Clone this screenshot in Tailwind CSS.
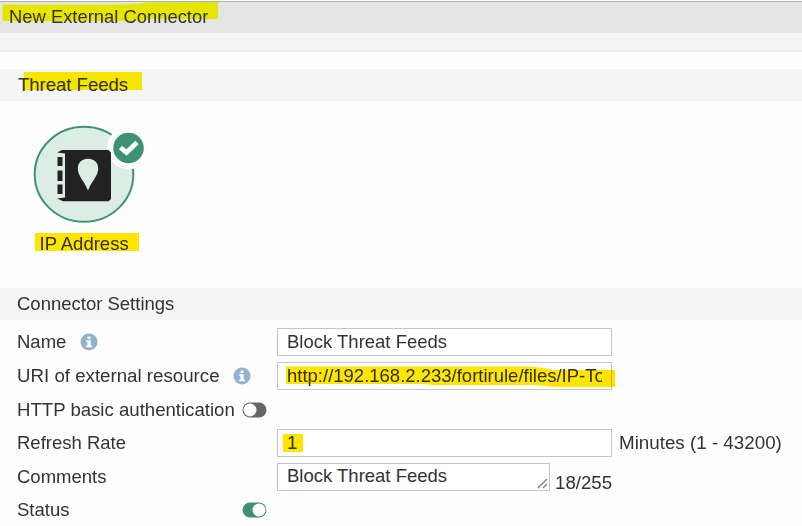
<!DOCTYPE html>
<html lang="en">
<head>
<meta charset="utf-8">
<title>New External Connector</title>
<script src="https://cdn.jsdelivr.net/npm/@tailwindcss/browser@4"></script>
</head>
<body class="bg-white">
<main class="h-[526px] w-[802px] overflow-hidden bg-[#fefefe] pt-px font-['Liberation_Sans',Arial,sans-serif] text-[18.5px] leading-[22px] text-[#333]">
  <header class="relative flex h-8 items-start border-t border-[#abb0af] bg-[#e5e5e5] pl-[9px] pt-[4px]">
    <h1 class="whitespace-nowrap text-[18.4px]">New External Connector</h1>
    <svg class="absolute left-0 -top-[2px] mix-blend-multiply" width="220" height="24"><path d="M2.5 4.500H120Q138 4 146 2.500L218 2V19H150L140 21H2.500Z" fill="#ffff00"/></svg>
  </header>
  <div class="h-[19px] border-b-2 border-[#ececec] bg-[#f5f5f5]"></div>
  <section class="mt-[17px]">
    <h2 class="relative flex h-8 items-center bg-[#f5f5f5] pl-[18px]">
      <span class="whitespace-nowrap">Threat Feeds</span>
      <svg class="absolute left-6 top-[3px] mix-blend-multiply" width="118" height="18"><rect width="118" height="18" fill="#fff000"/></svg>
    </h2>
    <div class="flex h-[187px] flex-col items-start pl-[30px] pt-[22px]">
      <svg width="120" height="104" viewBox="30 123 120 104">
        <ellipse cx="84" cy="174.300" rx="49.300" ry="47.500" fill="#dcede5" stroke="#3f9271" stroke-width="2"/>
        <circle cx="128.500" cy="148" r="21.500" fill="#fefefe"/>
        <circle cx="128.500" cy="148" r="15.300" fill="#3f9271"/>
        <path d="M120.500 147.500L126.500 152.500L137 142.500" fill="none" stroke="#fff" stroke-width="4.800"/>
        <path d="M62 150H108.500L111 152.500V199L108.500 201.200H63L57 198.500L65 197.500V153.500L57 152.500Z" fill="#222"/>
        <path d="M57.500 157H62.500V166H57.500ZM57.500 170.500H62.500V181H57.500ZM57.500 184.500H62.500V194H57.500Z" fill="#222"/>
        <path d="M88 190.500C85 182 77.800 176 77.800 168.700C77.800 162.500 82 158.800 88 158.800S98.200 162.500 98.200 168.700C98.200 176 91 182 88 190.500Z" fill="#dcede5"/>
      </svg>
      <div class="relative mt-[6px] ml-[9.500px] h-[24px] whitespace-nowrap">IP Address
        <svg class="absolute -left-[5px] top-0 mix-blend-multiply" width="105" height="18"><rect width="104" height="18" fill="#ffe600"/></svg>
      </div>
    </div>
  </section>
  <section>
    <h2 class="flex h-8 items-center bg-[#f5f5f5] pl-[17px] pb-px whitespace-nowrap">Connector Settings</h2>
    <div class="grid grid-cols-[260px_525px] grid-rows-[34px_34px_33px_34px_33px_34px] pl-[17px] pt-[5px]">
      <div class="flex items-center">
        <span>Name</span>
        <svg class="ml-[14px]" width="18" height="18" viewBox="0 0 18 18"><circle cx="9" cy="9" r="8.500" fill="#92b3cd"/><path d="M7.500 3.500H10.500V6H7.500ZM6.300 7.300H10.700V12.500H12V14.300H6.300V12.500H7.500V9H6.300Z" fill="#fff"/></svg>
      </div>
      <div class="flex items-center">
        <div class="flex h-[28px] w-[335px] items-center border border-[#c5c5c5] bg-white pl-[9px] pb-px">Block Threat Feeds</div>
      </div>
      <div class="flex items-center whitespace-nowrap">
        <span class="text-[18.700px]">URI of external resource</span>
        <svg class="ml-[13px]" width="18" height="18" viewBox="0 0 18 18"><circle cx="9" cy="9" r="8.500" fill="#92b3cd"/><path d="M7.500 3.500H10.500V6H7.500ZM6.300 7.300H10.700V12.500H12V14.300H6.300V12.500H7.500V9H6.300Z" fill="#fff"/></svg>
      </div>
      <div class="relative flex items-center">
        <div class="flex h-[28px] w-[335px] items-center border border-[#c5c5c5] bg-white pr-[9px] pl-[9px] pb-px"><span class="w-[316px] overflow-hidden whitespace-nowrap">http://192.168.2.233/fortirule/files/IP-To</span></div>
        <svg class="absolute left-[9px] top-[7px] mix-blend-multiply" width="330" height="22"><path d="M0 .5H240Q258 1 266 4H329V21H270Q258 20 250 19H150Q138 18 128 18H0Z" fill="#ffe600"/></svg>
      </div>
      <div class="flex items-center whitespace-nowrap">
        <span class="text-[18.600px]">HTTP basic authentication</span>
        <svg class="ml-[7px]" width="25" height="16" viewBox="0 0 25 16"><rect x=".5" y=".5" width="24" height="15" rx="7.500" fill="#666"/><circle cx="8" cy="8" r="6.500" fill="#fff"/></svg>
      </div>
      <div></div>
      <div class="flex items-center">Refresh Rate</div>
      <div class="flex items-center whitespace-nowrap">
        <div class="relative flex h-[28px] w-[335px] items-center border border-[#c5c5c5] bg-white pl-[9px] pb-px">1
          <svg class="absolute left-[5px] top-1 mix-blend-multiply" width="20" height="18"><rect width="20" height="18" fill="#ffe600"/></svg>
        </div>
        <span class="ml-[7px] text-[18.800px]">Minutes (1 - 43200)</span>
      </div>
      <div class="flex items-center">Comments</div>
      <div class="flex items-center whitespace-nowrap">
        <div class="relative flex h-[28px] w-[273px] items-center border border-[#c5c5c5] bg-white pl-[9px] pb-px">Block Threat Feeds
          <svg class="absolute right-[1px] bottom-[1px]" width="11" height="11"><path d="M1 10L10 1M6 10L10 6" stroke="#777" stroke-width="1.200"/></svg>
        </div>
        <span class="mt-3 ml-[5px] text-[18.700px]">18/255</span>
      </div>
      <div class="flex items-center">
        <span class="w-[225px]">Status</span>
        <svg width="25" height="16" viewBox="0 0 25 16"><rect x=".5" y=".5" width="24" height="15" rx="7.500" fill="#3f9271"/><circle cx="17" cy="8" r="6.500" fill="#fff"/></svg>
      </div>
    </div>
  </section>
</main>
</body>
</html>
